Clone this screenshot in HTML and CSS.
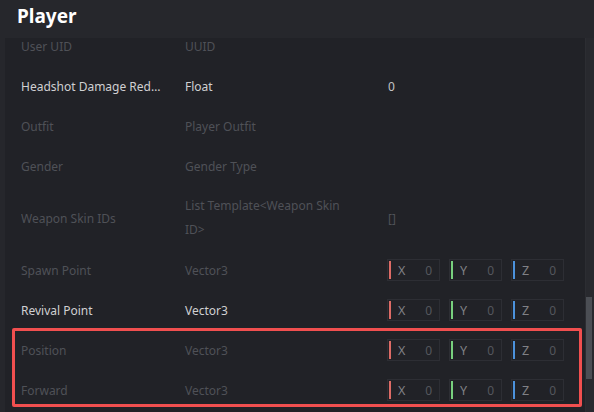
FILE: index.html
```html
<!DOCTYPE html>
<html>
<head>
<meta charset="utf-8">
<link rel="stylesheet" href="styles.css">
</head>
<body>
<div class="app">
  <div class="header"><span class="title">Player</span></div>
  <div class="main">
    <div class="gutter"></div>
    <div class="content">
      <div class="list">
        <div class="row dim"><div class="label">User UID</div><div class="type">UUID</div><div class="value"></div></div>
        <div class="row bright"><div class="label">Headshot Damage Reduction</div><div class="type">Float</div><div class="value">0</div></div>
        <div class="row dim"><div class="label">Outfit</div><div class="type">Player Outfit</div><div class="value"></div></div>
        <div class="row dim"><div class="label">Gender</div><div class="type">Gender Type</div><div class="value"></div></div>
        <div class="row dim tall"><div class="label">Weapon Skin IDs</div><div class="type wrap">List Template&lt;Weapon Skin ID&gt;</div><div class="value">[]</div></div>
        <div class="row dim"><div class="label">Spawn Point</div><div class="type">Vector3</div>
          <div class="value vec">
            <div class="field"><span class="bar x"></span><span class="axis">X</span><span class="num">0</span></div>
            <div class="field"><span class="bar y"></span><span class="axis">Y</span><span class="num">0</span></div>
            <div class="field"><span class="bar z"></span><span class="axis">Z</span><span class="num">0</span></div>
          </div>
        </div>
        <div class="row bright"><div class="label">Revival Point</div><div class="type">Vector3</div>
          <div class="value vec">
            <div class="field"><span class="bar x"></span><span class="axis">X</span><span class="num">0</span></div>
            <div class="field"><span class="bar y"></span><span class="axis">Y</span><span class="num">0</span></div>
            <div class="field"><span class="bar z"></span><span class="axis">Z</span><span class="num">0</span></div>
          </div>
        </div>
        <div class="row dim"><div class="label">Position</div><div class="type">Vector3</div>
          <div class="value vec">
            <div class="field"><span class="bar x"></span><span class="axis">X</span><span class="num">0</span></div>
            <div class="field"><span class="bar y"></span><span class="axis">Y</span><span class="num">0</span></div>
            <div class="field"><span class="bar z"></span><span class="axis">Z</span><span class="num">0</span></div>
          </div>
        </div>
        <div class="row dim"><div class="label">Forward</div><div class="type">Vector3</div>
          <div class="value vec">
            <div class="field"><span class="bar x"></span><span class="axis">X</span><span class="num">0</span></div>
            <div class="field"><span class="bar y"></span><span class="axis">Y</span><span class="num">0</span></div>
            <div class="field"><span class="bar z"></span><span class="axis">Z</span><span class="num">0</span></div>
          </div>
        </div>
      </div>
      <div class="highlight"></div>
    </div>
    <div class="scrollbar"><div class="thumb"></div></div>
  </div>
</div>
</body>
</html>
```
FILE: styles.css
```css
* { box-sizing: border-box; }
html, body {
  margin: 0;
  padding: 0;
  background: #26272c;
}
body {
  font-family: "Noto Sans", "Open Sans", sans-serif;
  font-size: 12px;
  width: 594px;
  height: 412px;
  overflow: hidden;
}
.app {
  width: 594px;
  height: 412px;
  display: flex;
  flex-direction: column;
}
.header {
  height: 38px;
  padding-left: 17px;
  display: flex;
  align-items: center;
  padding-bottom: 6px;
}
.title {
  color: #ffffff;
  font-weight: 700;
  font-size: 19px;
}
.main {
  flex: 1;
  display: flex;
  min-height: 0;
}
.gutter {
  width: 5px;
  flex: none;
}
.content {
  width: 580px;
  flex: none;
  background: #212227;
  overflow: hidden;
  position: relative;
}
.list {
  margin-top: -12px;
}
.row {
  height: 40px;
  display: grid;
  grid-template-columns: 164px 202px 1fr;
  align-items: center;
  padding-left: 16px;
}
.row.tall {
  height: 64px;
}
.label {
  white-space: nowrap;
  overflow: hidden;
  text-overflow: ellipsis;
  padding-right: 24px;
}
.type {
  white-space: nowrap;
}
.type.wrap {
  white-space: normal;
  line-height: 24px;
  padding-right: 30px;
}
.dim .label, .dim .type, .dim .value { color: #4f5157; }
.bright .label, .bright .type { color: #d0d0d2; }
.bright .value { color: #c4c4c6; }
.value {
  padding-left: 1px;
}
.vec {
  display: flex;
  gap: 9px;
  padding-left: 0;
}
.field {
  width: 53px;
  height: 22px;
  border: 1px solid #2d2e34;
  display: flex;
  align-items: center;
  padding: 0 7px 0 1px;
}
.bar {
  width: 2px;
  height: 18px;
  flex: none;
}
.bar.x { background: #dd6b66; }
.bar.y { background: #78d07e; }
.bar.z { background: #4c92dc; }
.axis {
  color: #808186;
  margin-left: 7px;
  font-size: 12.5px;
}
.num {
  margin-left: auto;
  color: #55575d;
}
.highlight {
  position: absolute;
  left: 7px;
  top: 290px;
  width: 570px;
  height: 79px;
  border: 3px solid #f14f4f;
  border-radius: 2px;
}
.scrollbar {
  flex: 1;
  background: #28292e;
  border-left: 1px solid #2c2d32;
  position: relative;
}
.thumb {
  margin-top: 259px;
  width: 6px;
  height: 82px;
  background: #4b4e54;
}
```
